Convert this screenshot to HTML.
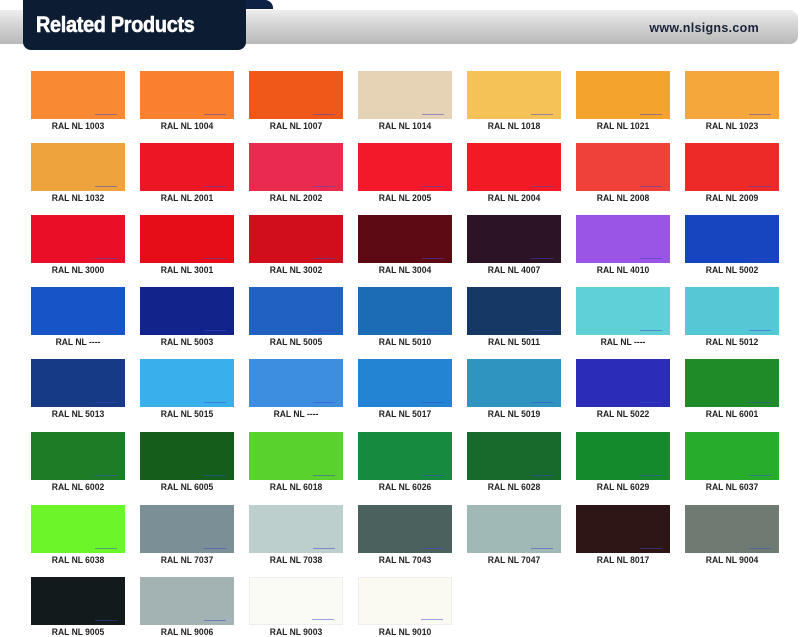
<!DOCTYPE html>
<html><head><meta charset="utf-8"><style>
body{margin:0;width:800px;height:636px;background:#fff;position:relative;overflow:hidden;font-family:"Liberation Sans",sans-serif}
.bar{position:absolute;left:-10px;top:10px;width:808px;height:34px;border-radius:0 8px 8px 0;background:linear-gradient(#eeeeee 0%,#d6d6d6 40%,#b9b9b9 100%)}
.tail{position:absolute;left:200px;top:0;width:73px;height:9px;background:#0d2244;border-radius:0 8px 0 0}
.tab{position:absolute;left:23px;top:0;width:223px;height:50px;background:#0b1c33;border-radius:0 0 8px 8px}
.tab span{position:absolute;left:13px;top:12px;color:#fff;font-weight:bold;font-size:22px;letter-spacing:-0.3px;transform:scaleX(0.9);transform-origin:left;-webkit-text-stroke:0.6px #fff}
.url{position:absolute;right:41px;top:21px;font-weight:bold;font-size:12.5px;color:#1a2438;letter-spacing:0.3px}
.s{position:absolute;width:94px;height:48px;box-sizing:border-box}
.s i{position:absolute;right:8px;bottom:4px;width:22px;height:2px;border-bottom:1px solid rgba(60,70,200,.5)}
.l{position:absolute;width:110px;text-align:center;font-size:9px;font-weight:bold;color:#222;transform:scaleX(0.95)}
</style></head><body>
<div class="bar"></div><div class="tail"></div>
<div class="tab"><span>Related Products</span></div>
<div class="url">www.nlsigns.com</div>
<div id="g"></div>
<script>
var d=[
["1003","#f98a33"],["1004","#f8802f"],["1007","#f0581a"],["1014","#e6d2b5"],["1018","#f5c258"],["1021","#f4a42d"],["1023","#f6a73b"],
["1032","#eea33c"],["2001","#ec1624"],["2002","#ea2a4e"],["2005","#f4192a"],["2004","#f21a24"],["2008","#f0403a"],["2009","#ee2a28"],
["3000","#ea0e26"],["3001","#e60d18"],["3002","#d00e1c"],["3004","#5e0a14"],["4007","#2c1326"],["4010","#9a55e6"],["5002","#1745c0"],
[" ----","#1655c8"],["5003","#13238c"],["5005","#1f62c0"],["5010","#1b6cb4"],["5011","#153864"],[" ----","#5ed0d6"],["5012","#55c8d6"],
["5013","#173a86"],["5015","#3ab0ea"],[" ----","#3d8ee0"],["5017","#2484d4"],["5019","#2f94c0"],["5022","#2b2cb8"],["6001","#1e8a28"],
["6002","#1d7c26"],["6005","#145e1c"],["6018","#5ad22e"],["6026","#168a3e"],["6028","#176a2c"],["6029","#158a2c"],["6037","#27ac2c"],
["6038","#6cf62a"],["7037","#7a9096"],["7038","#bccfcc"],["7043","#4a615e"],["7047","#a0b8b6"],["8017","#2e1616"],["9004","#6e7a72"],
["9005","#121a1c"],["9006","#a3b2b2"],["9003","#fbfbf6"],["9010","#fafaf3"]];
var rows=[71,143,215,287,359,432,505,577],h='';
d.forEach(function(c,k){var x=31+(k%7)*109,y=rows[Math.floor(k/7)];
var b=(c[0]=="9003"||c[0]=="9010")?'border:1px solid #eee;':'';
h+='<div class="s" style="left:'+x+'px;top:'+y+'px;background:'+c[1]+';'+b+'"><i></i></div>';
h+='<div class="l" style="left:'+(x-8)+'px;top:'+(y+50)+'px">RAL NL '+c[0]+'</div>';});
document.getElementById('g').innerHTML=h;
</script>
</body></html>
